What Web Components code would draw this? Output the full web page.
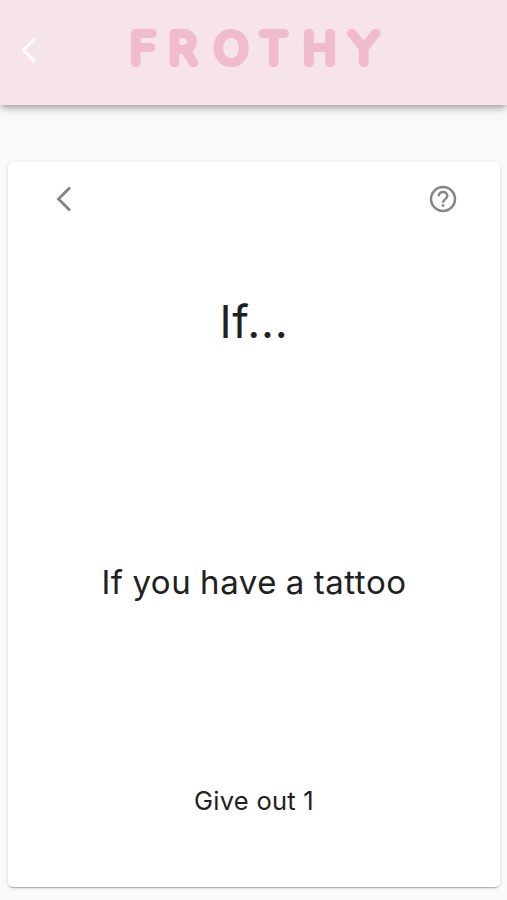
<!DOCTYPE html>
<html lang="en">
<head>
  <meta charset="utf-8">
  <meta name="viewport" content="width=device-width, initial-scale=1">
  <title>Frothy</title>
  <style>
    body {
      margin: 0;
      background: #fafafa;
      color: #212121;
      font-family: Inter, Roboto, sans-serif;
    }
  </style>
</head>
<body>
  <frothy-app>
    <frothy-header slot="header"></frothy-header>
    <frothy-card>
      <span slot="title">If...</span>
      <span slot="rule">If you have a tattoo</span>
      <span slot="action">Give out 1</span>
    </frothy-card>
  </frothy-app>

  <script>
    class FrothyApp extends HTMLElement {
      constructor() {
        super();
        this.attachShadow({ mode: 'open' }).innerHTML = `
          <style>
            :host {
              display: flex;
              flex-direction: column;
              height: 900px;
            }
            main {
              display: flex;
              flex: 1;
              padding: 57px 7px 13px 8px;
            }
          </style>
          <slot name="header"></slot>
          <main><slot></slot></main>`;
      }
    }

    class FrothyIcon extends HTMLElement {
      connectedCallback() {
        const icons = {
          back: '<path d="M18 3.5 6.5 15 18 26.5" stroke-width="2.9"/>',
          help: `
            <circle cx="15" cy="15" r="12" stroke-width="2.5"/>
            <path d="M10.7 12.2c0-2.6 1.9-4.2 4.3-4.2s4.3 1.7 4.3 4c0 3-4.3 3.3-4.3 6.7" stroke-width="2.4"/>
            <path d="M15 20.2v2.5" stroke-width="2.6"/>`
        };
        this.attachShadow({ mode: 'open' }).innerHTML = `
          <style>
            :host {
              display: block;
              width: 30px;
              height: 30px;
            }
            svg {
              display: block;
              fill: none;
              stroke: currentColor;
            }
          </style>
          <svg width="30" height="30" viewBox="0 0 30 30">${icons[this.getAttribute('name')]}</svg>`;
      }
    }

    class FrothyHeader extends HTMLElement {
      constructor() {
        super();
        this.attachShadow({ mode: 'open' }).innerHTML = `
          <style>
            :host {
              display: grid;
              grid-template-columns: 48px 1fr 48px;
              align-items: start;
              height: 105px;
              background: #f7e4ea;
              box-shadow: 0 4px 6px -1px rgba(0, 0, 0, 0.3), 0 7px 13px rgba(0, 0, 0, 0.06);
            }
            frothy-icon {
              margin: 35px 0 0 17px;
              color: #fff;
            }
            svg {
              justify-self: center;
              margin-top: 20px;
            }
            text {
              font: 100 40.5px Inter, sans-serif;
              text-anchor: middle;
              fill: #f0bbcd;
              stroke: #f0bbcd;
              stroke-width: 8px;
              stroke-linejoin: round;
              stroke-linecap: round;
            }
          </style>
          <frothy-icon name="back"></frothy-icon>
          <svg width="260" height="58" viewBox="0 0 260 58">
            <text transform="scale(1.08 1)" x="17.6 54.2 99.1 138.6 181 222" y="43.3">FROTHY</text>
          </svg>`;
      }
    }

    class FrothyCard extends HTMLElement {
      constructor() {
        super();
        this.attachShadow({ mode: 'open' }).innerHTML = `
          <style>
            :host {
              display: flex;
              flex: 1;
              flex-direction: column;
              align-items: center;
              border-radius: 5px;
              background: #fff;
              box-shadow: 0 3px 1px -2px rgba(0, 0, 0, 0.18), 0 1px 2px rgba(0, 0, 0, 0.14), 0 1px 5px rgba(0, 0, 0, 0.08);
            }
            nav {
              display: flex;
              align-self: stretch;
              justify-content: space-between;
              padding: 22px 42px 0 44px;
              color: #858585;
            }
            h1, h2, p {
              margin: 0;
              font-weight: 400;
              white-space: nowrap;
            }
            h1 {
              margin-top: 78px;
              font-size: 45px;
              line-height: 60px;
              letter-spacing: 0.8px;
            }
            h2 {
              margin-top: 210px;
              font-size: 33px;
              line-height: 40px;
              letter-spacing: 0.55px;
              word-spacing: -1px;
            }
            p {
              margin-top: 183px;
              font-size: 25.5px;
              line-height: 32px;
              letter-spacing: 0.25px;
            }
          </style>
          <nav>
            <frothy-icon name="back"></frothy-icon>
            <frothy-icon name="help"></frothy-icon>
          </nav>
          <h1><slot name="title"></slot></h1>
          <h2><slot name="rule"></slot></h2>
          <p><slot name="action"></slot></p>`;
      }
    }

    customElements.define('frothy-icon', FrothyIcon);
    customElements.define('frothy-header', FrothyHeader);
    customElements.define('frothy-card', FrothyCard);
    customElements.define('frothy-app', FrothyApp);
  </script>
</body>
</html>
